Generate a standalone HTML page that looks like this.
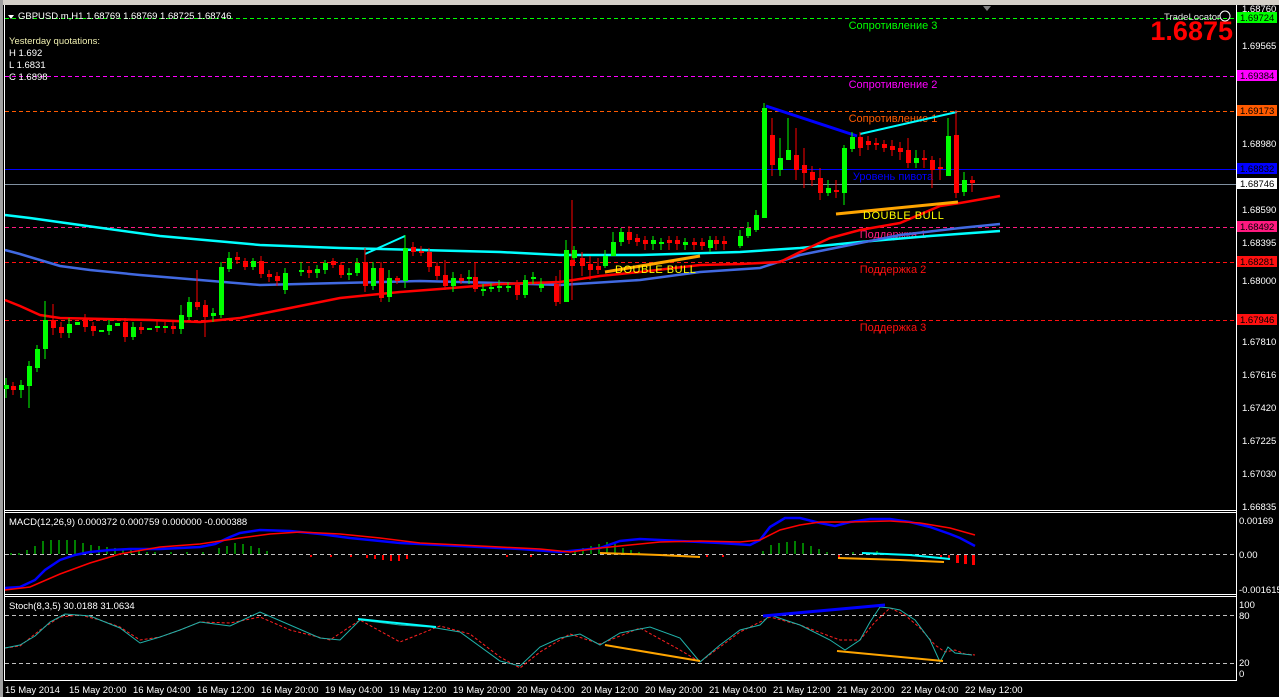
<!DOCTYPE html>
<html><head><meta charset="utf-8"><style>
html,body{margin:0;padding:0;background:#000;width:1279px;height:697px;overflow:hidden}
svg{display:block}
text{font-family:"Liberation Sans",sans-serif}
</style></head><body>
<svg width="1279" height="697" viewBox="0 0 1279 697" xmlns="http://www.w3.org/2000/svg">
<rect width="1279" height="697" fill="#000"/>
<rect x="0" y="0" width="1279" height="5" fill="#d4d0c8"/>
<rect x="0" y="0" width="3" height="697" fill="#a0a0a0"/>
<polygon points="983,6 991,6 987,11" fill="#808080"/>
<g stroke="#fff" stroke-width="1" fill="none">
<line x1="4.5" y1="5" x2="4.5" y2="681"/>
<line x1="1236.5" y1="5" x2="1236.5" y2="681"/>
<line x1="4" y1="510.5" x2="1237" y2="510.5"/>
<line x1="4" y1="512.5" x2="1237" y2="512.5"/>
<line x1="4" y1="594.5" x2="1237" y2="594.5"/>
<line x1="4" y1="596.5" x2="1237" y2="596.5"/>
<line x1="4" y1="680.5" x2="1237" y2="680.5"/>
</g>
<g stroke-width="1" stroke-dasharray="4,3" fill="none">
<line x1="5" y1="18.5" x2="1236" y2="18.5" stroke="#00ff00"/>
<line x1="5" y1="76.5" x2="1236" y2="76.5" stroke="#ff00ff"/>
<line x1="5" y1="111.5" x2="1236" y2="111.5" stroke="#ff5a00"/>
<line x1="5" y1="227.5" x2="1236" y2="227.5" stroke="#ff1a80"/>
<line x1="5" y1="262.5" x2="1236" y2="262.5" stroke="#ff1010"/>
<line x1="5" y1="320.5" x2="1236" y2="320.5" stroke="#ff1010"/>
</g>
<line x1="5" y1="169.5" x2="1236" y2="169.5" stroke="#0000ff"/>
<line x1="5" y1="184.5" x2="1236" y2="184.5" stroke="#8090a0"/>
<g font-size="11" text-anchor="middle">
<text x="893" y="29" fill="#00ff00">Сопротивление 3</text>
<text x="893" y="88" fill="#ff00ff">Сопротивление 2</text>
<text x="893" y="122" fill="#ff5a00">Сопротивление 1</text>
<text x="893" y="180" fill="#0000ff">Уровень пивота</text>
<text x="893" y="238" fill="#ff1a80">Поддержка 1</text>
<text x="893" y="273" fill="#ff1010">Поддержка 2</text>
<text x="893" y="331" fill="#ff1010">Поддержка 3</text>
</g>
<polyline fill="none" stroke="#00ffff" stroke-width="2.5" points="5,215 30,218 80,225 160,236 260,245 340,248 420,250 500,252 560,255 640,255 740,252 800,248 860,242 930,236 1000,231"/>
<polyline fill="none" stroke="#4169e1" stroke-width="2.5" points="5,250 20,254 40,260 60,266 90,270 140,275 200,280 260,285 340,283 420,281 500,283 560,285 640,280 700,272 760,268 800,255 850,245 900,235 960,228 1000,224"/>
<polyline fill="none" stroke="#ff0000" stroke-width="2.5" points="5,300 20,306 40,315 60,318 150,320 200,322 240,318 280,310 340,298 400,292 440,289 500,284 560,282 600,276 640,272 700,265 740,264 780,262 800,252 830,238 860,230 900,223 940,206 960,203 1000,196"/>
<polyline fill="none" stroke="#0000ff" stroke-width="3" points="766,106 857,136"/>
<polyline fill="none" stroke="#00ffff" stroke-width="2" points="860,134 957,112"/>
<polyline fill="none" stroke="#00ffff" stroke-width="2" points="365,254 405,236"/>
<polyline fill="none" stroke="#ffa500" stroke-width="3" points="836,214 958,202"/>
<polyline fill="none" stroke="#ffa500" stroke-width="3" points="605,272 700,256"/>
<text x="863" y="219" font-size="11" fill="#ffff00" font-family="Liberation Mono" letter-spacing="0.5">DOUBLE BULL</text>
<text x="615" y="273" font-size="11" fill="#ffff00" font-family="Liberation Mono" letter-spacing="0.5">DOUBLE BULL</text>
<path stroke="#00ff00" stroke-width="1" fill="none" d="M6,378V398M21,380V398M29,361V408M37,345V372M45,301V359M69,318V338M109,320V335M133,322V340M181,305V334M189,297V320M213,308V322M221,262V318M229,252V272M253,258V270M285,268V294M301,262V276M317,265V278M325,260V274M349,268V280M357,258V276M373,262V290M389,270V302M405,235V288M453,272V292M469,270V284M483,284V296M491,283V292M499,280V292M508,282V292M525,275V298M533,272V284M541,278V292M566,240V302M574,246V262M605,250V268M613,232V250M621,228V246M653,236V250M661,238V250M685,238V250M710,236V252M740,230V248M748,222V238M756,210V232M764,103V218M780,138V176M788,118V150M828,180V196M844,145V205M852,132V152M916,150V168M948,118V172M964,172V196"/>
<path stroke="#ff0000" stroke-width="1" fill="none" d="M13,382V395M53,304V335M61,322V338M85,314V332M93,322V336M125,318V342M141,322V334M157,320V332M165,322V333M173,321V334M197,270V310M205,300V337M237,252V264M245,258V270M261,256V278M269,270V282M277,272V286M309,266V278M333,258V268M341,262V278M365,248V292M381,262V302M397,276V284M413,242V256M421,246V256M429,248V272M437,262V280M445,260V290M461,274V284M475,262V292M517,280V300M556,276V306M560,270V304M572,200V300M582,252V276M590,256V280M598,258V274M629,226V244M637,234V246M645,236V250M669,236V250M677,236V250M694,238V250M702,238V250M716,236V250M724,236V250M772,118V176M796,128V180M804,148V188M812,166V186M820,168V200M836,180V198M860,132V156M868,136V150M876,138V150M884,140V152M892,140V156M900,142V160M908,138V168M924,150V168M932,156V188M940,158V180M956,110V198M972,176V192"/>
<path fill="#00ff00" d="M4,385h5v4h-5zM19,385h5v5h-5zM27,366h5v20h-5zM35,349h5v19h-5zM43,320h5v29h-5zM67,324h5v9h-5zM75,322h5v3h-5zM99,330h5v2h-5zM107,325h5v6h-5zM115,323h5v3h-5zM131,327h5v10h-5zM147,328h5v2h-5zM155,326h5v2h-5zM163,326h5v2h-5zM179,315h5v14h-5zM187,302h5v15h-5zM211,313h5v3h-5zM219,267h5v48h-5zM227,258h5v11h-5zM251,261h5v6h-5zM283,273h5v17h-5zM299,270h5v2h-5zM315,269h5v4h-5zM323,263h5v7h-5zM347,273h5v2h-5zM355,263h5v10h-5zM371,268h5v18h-5zM387,278h5v19h-5zM403,248h5v33h-5zM451,278h5v8h-5zM467,277h5v2h-5zM481,289h5v2h-5zM489,287h5v2h-5zM497,286h5v2h-5zM506,286h5v2h-5zM523,280h5v15h-5zM531,277h5v2h-5zM539,284h5v4h-5zM564,250h5v52h-5zM572,250h5v8h-5zM603,256h5v10h-5zM611,242h5v14h-5zM619,232h5v10h-5zM651,240h5v4h-5zM659,242h5v2h-5zM683,242h5v3h-5zM708,240h5v8h-5zM738,236h5v10h-5zM746,228h5v8h-5zM754,215h5v15h-5zM762,108h5v110h-5zM778,158h5v12h-5zM786,150h5v10h-5zM826,188h5v5h-5zM842,148h5v45h-5zM850,137h5v12h-5zM914,158h5v5h-5zM946,136h5v40h-5zM962,180h5v12h-5z"/>
<path fill="#ff0000" d="M11,386h5v4h-5zM51,320h5v8h-5zM59,327h5v6h-5zM83,319h5v8h-5zM91,326h5v5h-5zM123,322h5v15h-5zM139,327h5v3h-5zM171,326h5v3h-5zM195,302h5v5h-5zM203,305h5v12h-5zM235,257h5v3h-5zM243,261h5v6h-5zM259,261h5v13h-5zM267,274h5v3h-5zM275,276h5v5h-5zM307,270h5v3h-5zM331,261h5v4h-5zM339,265h5v10h-5zM363,262h5v24h-5zM379,268h5v30h-5zM395,278h5v3h-5zM411,247h5v5h-5zM419,251h5v2h-5zM427,252h5v15h-5zM435,266h5v10h-5zM443,275h5v11h-5zM459,278h5v3h-5zM473,277h5v12h-5zM515,285h5v10h-5zM554,284h5v18h-5zM570,260h5v6h-5zM580,258h5v8h-5zM588,264h5v6h-5zM596,266h5v4h-5zM627,232h5v8h-5zM635,238h5v4h-5zM643,240h5v4h-5zM667,240h5v3h-5zM675,240h5v4h-5zM692,242h5v3h-5zM700,242h5v4h-5zM714,240h5v4h-5zM722,241h5v3h-5zM770,135h5v30h-5zM794,155h5v15h-5zM802,165h5v8h-5zM810,172h5v8h-5zM818,178h5v15h-5zM834,190h5v2h-5zM858,137h5v11h-5zM866,141h5v4h-5zM874,143h5v2h-5zM882,144h5v4h-5zM890,146h5v4h-5zM898,148h5v4h-5zM906,150h5v13h-5zM922,158h5v2h-5zM930,160h5v10h-5zM938,167h5v2h-5zM954,135h5v58h-5zM970,180h5v3h-5z"/>
<polygon points="8,15 14,15 11,19" fill="#fff"/>
<g font-size="9.5" fill="#fff">
<text x="18" y="19">GBPUSD.m,H1  1.68769 1.68769 1.68725 1.68746</text>
<text x="9" y="44" fill="#f0f0b0">Yesterday quotations:</text>
<text x="9" y="56">H 1.692</text>
<text x="9" y="68">L 1.6831</text>
<text x="9" y="80">C 1.6898</text>
<text x="1164" y="20" fill="#e0e0e0">TradeLocator</text>
</g>
<circle cx="1225" cy="16" r="5" fill="none" stroke="#fff" stroke-width="1"/>
<text x="1233" y="40" font-size="27" font-weight="bold" fill="#ff0000" text-anchor="end">1.6875</text>
<g font-size="9.5" fill="#fff">
<text x="1242" y="12">1.68760</text>
<text x="1242" y="49">1.69565</text>
<text x="1242" y="147">1.68980</text>
<text x="1242" y="213">1.68590</text>
<text x="1242" y="246">1.68395</text>
<text x="1242" y="284">1.68000</text>
<text x="1242" y="345">1.67810</text>
<text x="1242" y="378">1.67616</text>
<text x="1242" y="411">1.67420</text>
<text x="1242" y="444">1.67225</text>
<text x="1242" y="477">1.67030</text>
<text x="1242" y="510">1.66835</text>
<text x="1239" y="524">0.00169</text>
<text x="1239" y="558">0.00</text>
<text x="1239" y="593">-0.001615</text>
<text x="1239" y="608">100</text>
<text x="1239" y="619">80</text>
<text x="1239" y="666">20</text>
<text x="1239" y="677">0</text>
</g>
<g font-size="9.5">
<rect x="1237" y="12" width="40" height="11" fill="#00ff00"/><text x="1240" y="21" fill="#000">1.69724</text>
<rect x="1237" y="70" width="40" height="11" fill="#ff00ff"/><text x="1240" y="79" fill="#000">1.69384</text>
<rect x="1237" y="105" width="40" height="11" fill="#ff5a00"/><text x="1240" y="114" fill="#000">1.69173</text>
<rect x="1237" y="163" width="40" height="11" fill="#0000ff"/><text x="1240" y="172" fill="#000">1.68832</text>
<rect x="1237" y="178" width="40" height="11" fill="#fff"/><text x="1240" y="187" fill="#000">1.68746</text>
<rect x="1237" y="221" width="40" height="11" fill="#ff1a80"/><text x="1240" y="230" fill="#000">1.68492</text>
<rect x="1237" y="256" width="40" height="11" fill="#ff1010"/><text x="1240" y="265" fill="#000">1.68281</text>
<rect x="1237" y="314" width="40" height="11" fill="#ff1010"/><text x="1240" y="323" fill="#000">1.67946</text>
</g>
<text x="9" y="525" font-size="9.5" fill="#fff">MACD(12,26,9) 0.000372 0.000759 0.000000 -0.000388</text>
<line x1="5" y1="554.5" x2="1236" y2="554.5" stroke="#c0c0c0" stroke-dasharray="4,3"/>
<path fill="#008000" d="M10,553h2v2h-2zM18,553h2v2h-2zM26,550h2v4h-2zM34,546h2v8h-2zM42,541h2v13h-2zM50,540h2v14h-2zM58,540h2v14h-2zM66,540h2v14h-2zM74,540h2v14h-2zM82,543h2v11h-2zM90,545h2v9h-2zM98,546h2v8h-2zM106,547h2v7h-2zM114,548h2v6h-2zM122,549h2v5h-2zM130,550h2v4h-2zM138,551h2v3h-2zM146,552h2v2h-2zM154,552h2v2h-2zM170,552h2v2h-2zM186,552h2v2h-2zM202,552h2v2h-2zM218,548h2v6h-2zM226,546h2v8h-2zM234,543h2v11h-2zM242,544h2v10h-2zM250,546h2v8h-2zM258,548h2v6h-2zM266,551h2v3h-2zM574,552h2v2h-2zM582,548h2v6h-2zM590,546h2v8h-2zM598,544h2v10h-2zM606,542h2v12h-2zM614,544h2v10h-2zM622,548h2v6h-2zM630,550h2v4h-2zM638,552h2v2h-2zM762,551h2v3h-2zM770,545h2v9h-2zM778,543h2v11h-2zM786,542h2v12h-2zM794,541h2v13h-2zM802,543h2v11h-2zM810,546h2v8h-2zM818,549h2v5h-2zM826,552h2v2h-2zM852,552h2v2h-2zM876,551h2v3h-2z"/>
<path fill="#ff0000" d="M310,555h2v2h-2zM330,555h2v2h-2zM350,555h2v2h-2zM366,555h2v3h-2zM374,555h2v4h-2zM382,555h2v5h-2zM390,555h2v6h-2zM398,555h2v6h-2zM406,555h2v4h-2zM506,555h2v2h-2zM530,555h2v2h-2zM706,555h2v2h-2zM722,555h2v2h-2zM838,555h2v3h-2zM940,555h2v3h-2zM948,555h2v5h-2zM956,555h3v8h-3zM964,555h3v9h-3zM972,555h3v10h-3z"/>
<polyline fill="none" stroke="#0000ff" stroke-width="2.5" points="5,588 20,587 35,580 45,570 60,560 75,555 90,552 110,550 130,549 160,549 200,547 215,544 230,537 240,533 260,530 290,531 320,534 350,538 380,541 400,543 440,545 480,547 520,549 560,552 580,550 600,548 620,541 640,539 680,541 720,543 750,545 760,540 770,527 785,518 800,518 820,523 835,526 850,522 870,519 890,519 910,522 930,527 950,534 960,538 975,546"/>
<polyline fill="none" stroke="#ff0000" stroke-width="1.5" points="5,590 30,587 60,574 90,563 120,554 160,547 200,544 240,538 270,534 300,532 340,534 380,538 420,543 460,545 500,547 540,549 570,552 600,548 630,545 660,542 700,541 740,542 760,540 780,530 800,525 820,522 850,522 890,521 920,523 950,528 975,535"/>
<polyline fill="none" stroke="#ffa500" stroke-width="2" points="600,553 660,555 700,557"/>
<polyline fill="none" stroke="#ffa500" stroke-width="2" points="838,558 900,560 944,562"/>
<polyline fill="none" stroke="#00ffff" stroke-width="2" points="862,553 910,555 950,559"/>
<text x="9" y="609" font-size="9.5" fill="#fff">Stoch(8,3,5) 30.0188 31.0634</text>
<line x1="5" y1="615.5" x2="1236" y2="615.5" stroke="#c0c0c0" stroke-dasharray="4,3"/>
<line x1="5" y1="663.5" x2="1236" y2="663.5" stroke="#c0c0c0" stroke-dasharray="4,3"/>
<polyline fill="none" stroke="#ff2020" stroke-width="1" stroke-dasharray="3,2" points="5,648 20,646 40,630 60,617 80,615 100,620 120,627 140,640 160,637 180,630 200,622 230,623 260,617 290,630 330,640 360,620 400,642 440,626 470,634 500,657 520,668 540,652 570,634 600,644 640,628 680,650 700,662 740,632 770,617 800,625 840,640 860,640 875,622 890,608 905,615 920,628 935,645 945,652 955,650 965,654 975,655"/>
<polyline fill="none" stroke="#20b2aa" stroke-width="1" points="5,648 20,645 35,636 50,622 65,614 90,616 120,628 140,643 160,637 180,630 200,622 230,626 260,612 290,625 320,638 340,640 360,620 400,625 430,627 460,632 500,661 520,666 540,647 560,638 580,634 600,645 620,633 650,627 680,638 700,662 720,645 740,630 760,625 770,615 800,625 830,640 845,650 860,640 870,622 880,607 890,608 900,610 915,620 930,640 940,662 948,647 955,653 972,655"/>
<polyline fill="none" stroke="#00ffff" stroke-width="2" points="358,619 436,627"/>
<polyline fill="none" stroke="#0000ff" stroke-width="3" points="763,616 885,605"/>
<polyline fill="none" stroke="#ffa500" stroke-width="2" points="605,645 700,661"/>
<polyline fill="none" stroke="#ffa500" stroke-width="2" points="837,651 943,661"/>
<g font-size="9.5" fill="#fff">
<text x="5" y="693">15 May 2014</text><text x="69" y="693">15 May 20:00</text><text x="133" y="693">16 May 04:00</text><text x="197" y="693">16 May 12:00</text><text x="261" y="693">16 May 20:00</text><text x="325" y="693">19 May 04:00</text><text x="389" y="693">19 May 12:00</text><text x="453" y="693">19 May 20:00</text><text x="517" y="693">20 May 04:00</text><text x="581" y="693">20 May 12:00</text><text x="645" y="693">20 May 20:00</text><text x="709" y="693">21 May 04:00</text><text x="773" y="693">21 May 12:00</text><text x="837" y="693">21 May 20:00</text><text x="901" y="693">22 May 04:00</text><text x="965" y="693">22 May 12:00</text>
</g>
</svg>
</body></html>
